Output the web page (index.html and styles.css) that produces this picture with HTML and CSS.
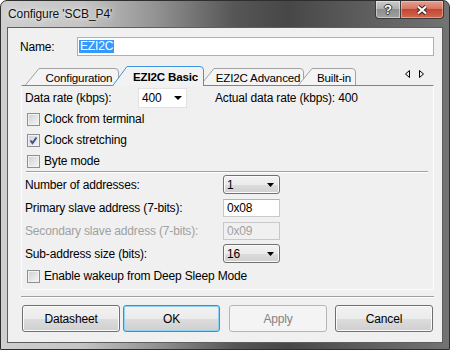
FILE: index.html
```html
<!DOCTYPE html>
<html lang="en">
<head>
  <meta charset="UTF-8">
  <title>Configure 'SCB_P4'</title>
  <link rel="stylesheet" href="styles.css">
</head>
<body>
  <div class="window">
    <div class="titlebar">
      <span class="title">Configure 'SCB_P4'</span>
      <div class="caption-buttons">
        <div class="cap-btn cap-help">?</div>
        <div class="cap-btn cap-close">
          <svg width="12" height="10" viewBox="0 0 12 10">
            <path d="M2 1.5 L10 8.5 M10 1.5 L2 8.5" stroke="#3b2520" stroke-width="4.2"/>
            <path d="M2 1.5 L10 8.5 M10 1.5 L2 8.5" stroke="#fff" stroke-width="2.2"/>
          </svg>
        </div>
      </div>
    </div>

    <div class="client">
      <div class="name-row">
        <label>Name:</label>
        <div class="name-input"><span class="sel">EZI2C</span></div>
      </div>

      <!-- tab headers -->
      <div class="tabstrip">
        <div class="tab tab-config">
          <svg width="94" height="17"><path d="M0.5 17 L14 0.5 L90 0.5 Q93.5 0.5 93.5 4 L93.5 17"/></svg>
          <span>Configuration</span>
        </div>
        <div class="tab tab-basic active">
          <svg width="92" height="20"><path d="M0.5 20 L15 0.5 L88 0.5 Q91.5 0.5 91.5 4 L91.5 20"/></svg>
          <span>EZI2C Basic</span>
        </div>
        <div class="tab tab-adv">
          <svg width="104" height="17"><path d="M0.5 17 L14 0.5 L100 0.5 Q103.5 0.5 103.5 4 L103.5 17"/></svg>
          <span>EZI2C Advanced</span>
        </div>
        <div class="tab tab-builtin">
          <svg width="58" height="17"><path d="M0.5 17 L14 0.5 L54 0.5 Q57.5 0.5 57.5 4 L57.5 17"/></svg>
          <span>Built-in</span>
        </div>
        <div class="tab-arrows">
          <svg width="5" height="8"><path d="M4.5 0.5 L0.5 4 L4.5 7.5 Z"/></svg>
          <svg width="5" height="8"><path d="M0.5 0.5 L4.5 4 L0.5 7.5 Z"/></svg>
        </div>
      </div>

      <div class="page">
        <div class="rate-row">
          <span class="rate-label">Data rate (kbps):</span>
          <div class="combo flat">
            <span>400</span>
            <svg width="8" height="4"><path d="M0 0 H8 L4 4 Z"/></svg>
          </div>
          <span class="actual">Actual data rate (kbps): 400</span>
        </div>

        <div class="checks">
          <div class="check-row"><span class="cb"></span>Clock from terminal</div>
          <div class="check-row">
            <span class="cb">
              <svg width="9" height="9"><path d="M1.5 4.5 L3.5 7 L7.5 1.5"/></svg>
            </span>Clock stretching
          </div>
          <div class="check-row"><span class="cb"></span>Byte mode</div>
        </div>

        <div class="sep"></div>

        <div class="fields">
          <span>Number of addresses:</span>
          <div class="combo">
            <span>1</span>
            <svg width="7" height="4"><path d="M0 0 H7 L3.5 4 Z"/></svg>
          </div>

          <span>Primary slave address (7-bits):</span>
          <div class="textbox">0x08</div>

          <span class="disabled">Secondary slave address (7-bits):</span>
          <div class="textbox disabled">0x09</div>

          <span>Sub-address size (bits):</span>
          <div class="combo">
            <span>16</span>
            <svg width="7" height="4"><path d="M0 0 H7 L3.5 4 Z"/></svg>
          </div>
        </div>

        <div class="check-row wake"><span class="cb"></span>Enable wakeup from Deep Sleep Mode</div>
      </div>

      <div class="footer-sep"></div>

      <div class="buttons">
        <div class="btn-group">
          <div class="btn">Datasheet</div>
          <div class="btn default">OK</div>
        </div>
        <div class="btn-group wide">
          <div class="btn disabled">Apply</div>
          <div class="btn">Cancel</div>
        </div>
      </div>
    </div>
  </div>
</body>
</html>
```

FILE: styles.css
```css
* {
  box-sizing: border-box;
}

body {
  margin: 0;
  font-family: 'Liberation Sans', Arial, sans-serif;
  font-size: 12px;
  color: #000;
  background: #fff;
}

.window {
  width: 450px;
  height: 350px;
  display: flex;
  flex-direction: column;
  padding: 0 6px 6px;
  border: 1px solid #2e2e2e;
  border-radius: 7px 7px 0 0;
  background: linear-gradient(to right, #cfcfcf 0%, #c4c4c4 18%, #949494 34%, #565656 52%, #474747 64%, #5c5c5c 80%, #737373 100%);
}

/* title bar */
.titlebar {
  height: 26px;
  display: flex;
  justify-content: space-between;
  align-items: flex-start;
}

.title {
  padding: 6px 0 0 1px;
  line-height: 15px;
  color: #111;
  letter-spacing: -0.1px;
  text-shadow: 0 0 8px rgba(255, 255, 255, 0.9), 0 0 3px rgba(255, 255, 255, 0.8);
}

.caption-buttons {
  display: flex;
  margin-right: -1px;
}

.cap-btn {
  height: 18px;
  display: flex;
  align-items: center;
  justify-content: center;
  border: 1px solid #3a3a3a;
  border-top: none;
}

.cap-help {
  width: 26px;
  border-radius: 0 0 0 4px;
  background: linear-gradient(#cbcbcb, #b0b0b0 45%, #8e8e8e 50%, #a0a0a0);
  box-shadow: inset 0 0 0 1px rgba(255, 255, 255, 0.45);
  color: #fff;
  font-weight: bold;
  font-size: 13px;
  text-shadow: 1px 0 0 #333, -1px 0 0 #333, 0 1px 0 #333, 0 -1px 0 #333;
}

.cap-close {
  width: 44px;
  margin-left: -1px;
  border-radius: 0 0 4px 0;
  background: linear-gradient(#e3a293, #d77662 45%, #c44530 50%, #d06a50);
  box-shadow: inset 0 0 0 1px rgba(255, 220, 210, 0.45);
}

/* client area */
.client {
  flex: 1;
  display: flex;
  flex-direction: column;
  padding: 9px 8px 10px 13px;
  background: #f0f0f0;
  border: 1px solid #5e5e5e;
  letter-spacing: -0.17px;
}

.name-row {
  display: flex;
  align-items: center;
  height: 19px;
}

.name-row label {
  width: 57px;
  margin-left: -1px;
}

.name-input {
  flex: 1;
  height: 19px;
  display: flex;
  align-items: center;
  padding: 0 1px;
  background: #fff;
  border: 1px solid #86b8e8;
}

.name-input .sel {
  background: #3399ff;
  color: #fff;
  line-height: 13px;
  padding: 0 1px;
}

/* tabs */
.tabstrip {
  height: 29px;
  display: flex;
  align-items: flex-end;
  padding-left: 4px;
  position: relative;
  z-index: 1;
}

.tab {
  position: relative;
  z-index: 1;
  height: 17px;
  display: flex;
  align-items: center;
  justify-content: center;
  padding-left: 14px;
  font-size: 11.6px;
  white-space: nowrap;
}

.tab svg {
  position: absolute;
  left: 0;
  top: 0;
}

.tab path {
  fill: #f4f4f4;
  stroke: #a2a2a2;
}

.tab span {
  position: relative;
  padding-top: 1px;
}

.tab.active {
  z-index: 3;
  height: 20px;
  margin-bottom: -1px;
  padding-left: 15px;
  font-weight: bold;
}

.tab.active path {
  fill: #f2f2f2;
  stroke: #3d95df;
}

.tab-config { width: 94px; }
.tab-basic { width: 92px; margin-left: -7px; }
.tab-adv { width: 104px; margin-left: -4px; padding-right: 2px; }
.tab-builtin { width: 58px; margin-left: -6px; }

.tab-arrows {
  margin-left: auto;
  margin-bottom: 7px;
  padding-right: 10px;
  display: flex;
  gap: 9px;
}

.tab-arrows path {
  fill: none;
  stroke: #000;
}

/* tab page */
.page {
  height: 205px;
  display: flex;
  flex-direction: column;
  padding: 2px 3px 0;
  border: 1px solid #fbfbfb;
  border-top-color: #3d95df;
}

.rate-row {
  height: 20px;
  display: flex;
  align-items: center;
}

.rate-label {
  width: 113px;
}

.actual {
  margin-left: 28px;
}

.combo {
  width: 57px;
  height: 19px;
  display: flex;
  align-items: center;
  justify-content: space-between;
  padding: 0 5px 0 3px;
  border: 1px solid #707070;
  border-radius: 3px;
  background: linear-gradient(#f2f2f2, #ebebeb 50%, #dddddd 50%, #cfcfcf);
  box-shadow: inset 0 0 0 1px #fbfbfb;
}

.combo.flat {
  width: 49px;
  height: 20px;
  padding-right: 4px;
  border: 1px solid #e2e2e2;
  border-radius: 0;
  background: #fff;
  box-shadow: none;
}

.combo path {
  fill: #000;
}

.checks {
  margin-top: 1px;
  display: flex;
  flex-direction: column;
  gap: 1px;
}

.check-row {
  height: 20px;
  display: flex;
  align-items: center;
}

.cb {
  width: 13px;
  height: 13px;
  margin: 0 4px 0 2px;
  display: flex;
  align-items: center;
  justify-content: center;
  border: 1px solid #8e8f8f;
  background: linear-gradient(135deg, #cdd0d4, #f6f6f6);
  box-shadow: inset 0 0 0 1px #f2f2f2;
}

.cb path {
  fill: none;
  stroke: #3d5491;
  stroke-width: 2;
}

.sep {
  margin: 0 2px 0 1px;
  border-top: 1px solid #a0a0a0;
  border-bottom: 1px solid #fff;
}

.fields {
  display: grid;
  grid-template-columns: 198px 57px;
  grid-auto-rows: 23px;
  align-items: center;
}

.textbox {
  height: 18px;
  display: flex;
  align-items: center;
  padding-left: 3px;
  background: #fff;
  border: 1px solid #c9c9c9;
  border-top-color: #b3b3b3;
}

.disabled {
  color: #a0a0a0;
}

.textbox.disabled {
  background: #f0f0f0;
  border-color: #c8c8c8;
}

.check-row.wake {
  height: 22px;
}

/* footer */
.footer-sep {
  margin-top: 6px;
  border-top: 1px solid #a0a0a0;
  border-bottom: 1px solid #fff;
}

.buttons {
  margin-top: 7px;
  padding: 0 1px;
  display: flex;
  justify-content: space-between;
}

.btn-group {
  display: flex;
  gap: 3px;
}

.btn-group.wide {
  gap: 8px;
}

.btn {
  width: 98px;
  height: 27px;
  display: flex;
  align-items: center;
  justify-content: center;
  border: 1px solid #707070;
  border-radius: 3px;
  background: linear-gradient(#f2f2f2, #ebebeb 50%, #dddddd 50%, #cfcfcf);
  box-shadow: inset 0 0 0 1px #fbfbfb;
}

.btn.default {
  width: 97px;
  border-color: #3c8fce;
  box-shadow: inset 0 0 0 1px #8fd3f4;
}

.btn.disabled {
  border-color: #b4b7b9;
  background: #f4f4f4;
  color: #838383;
  box-shadow: none;
}
```
